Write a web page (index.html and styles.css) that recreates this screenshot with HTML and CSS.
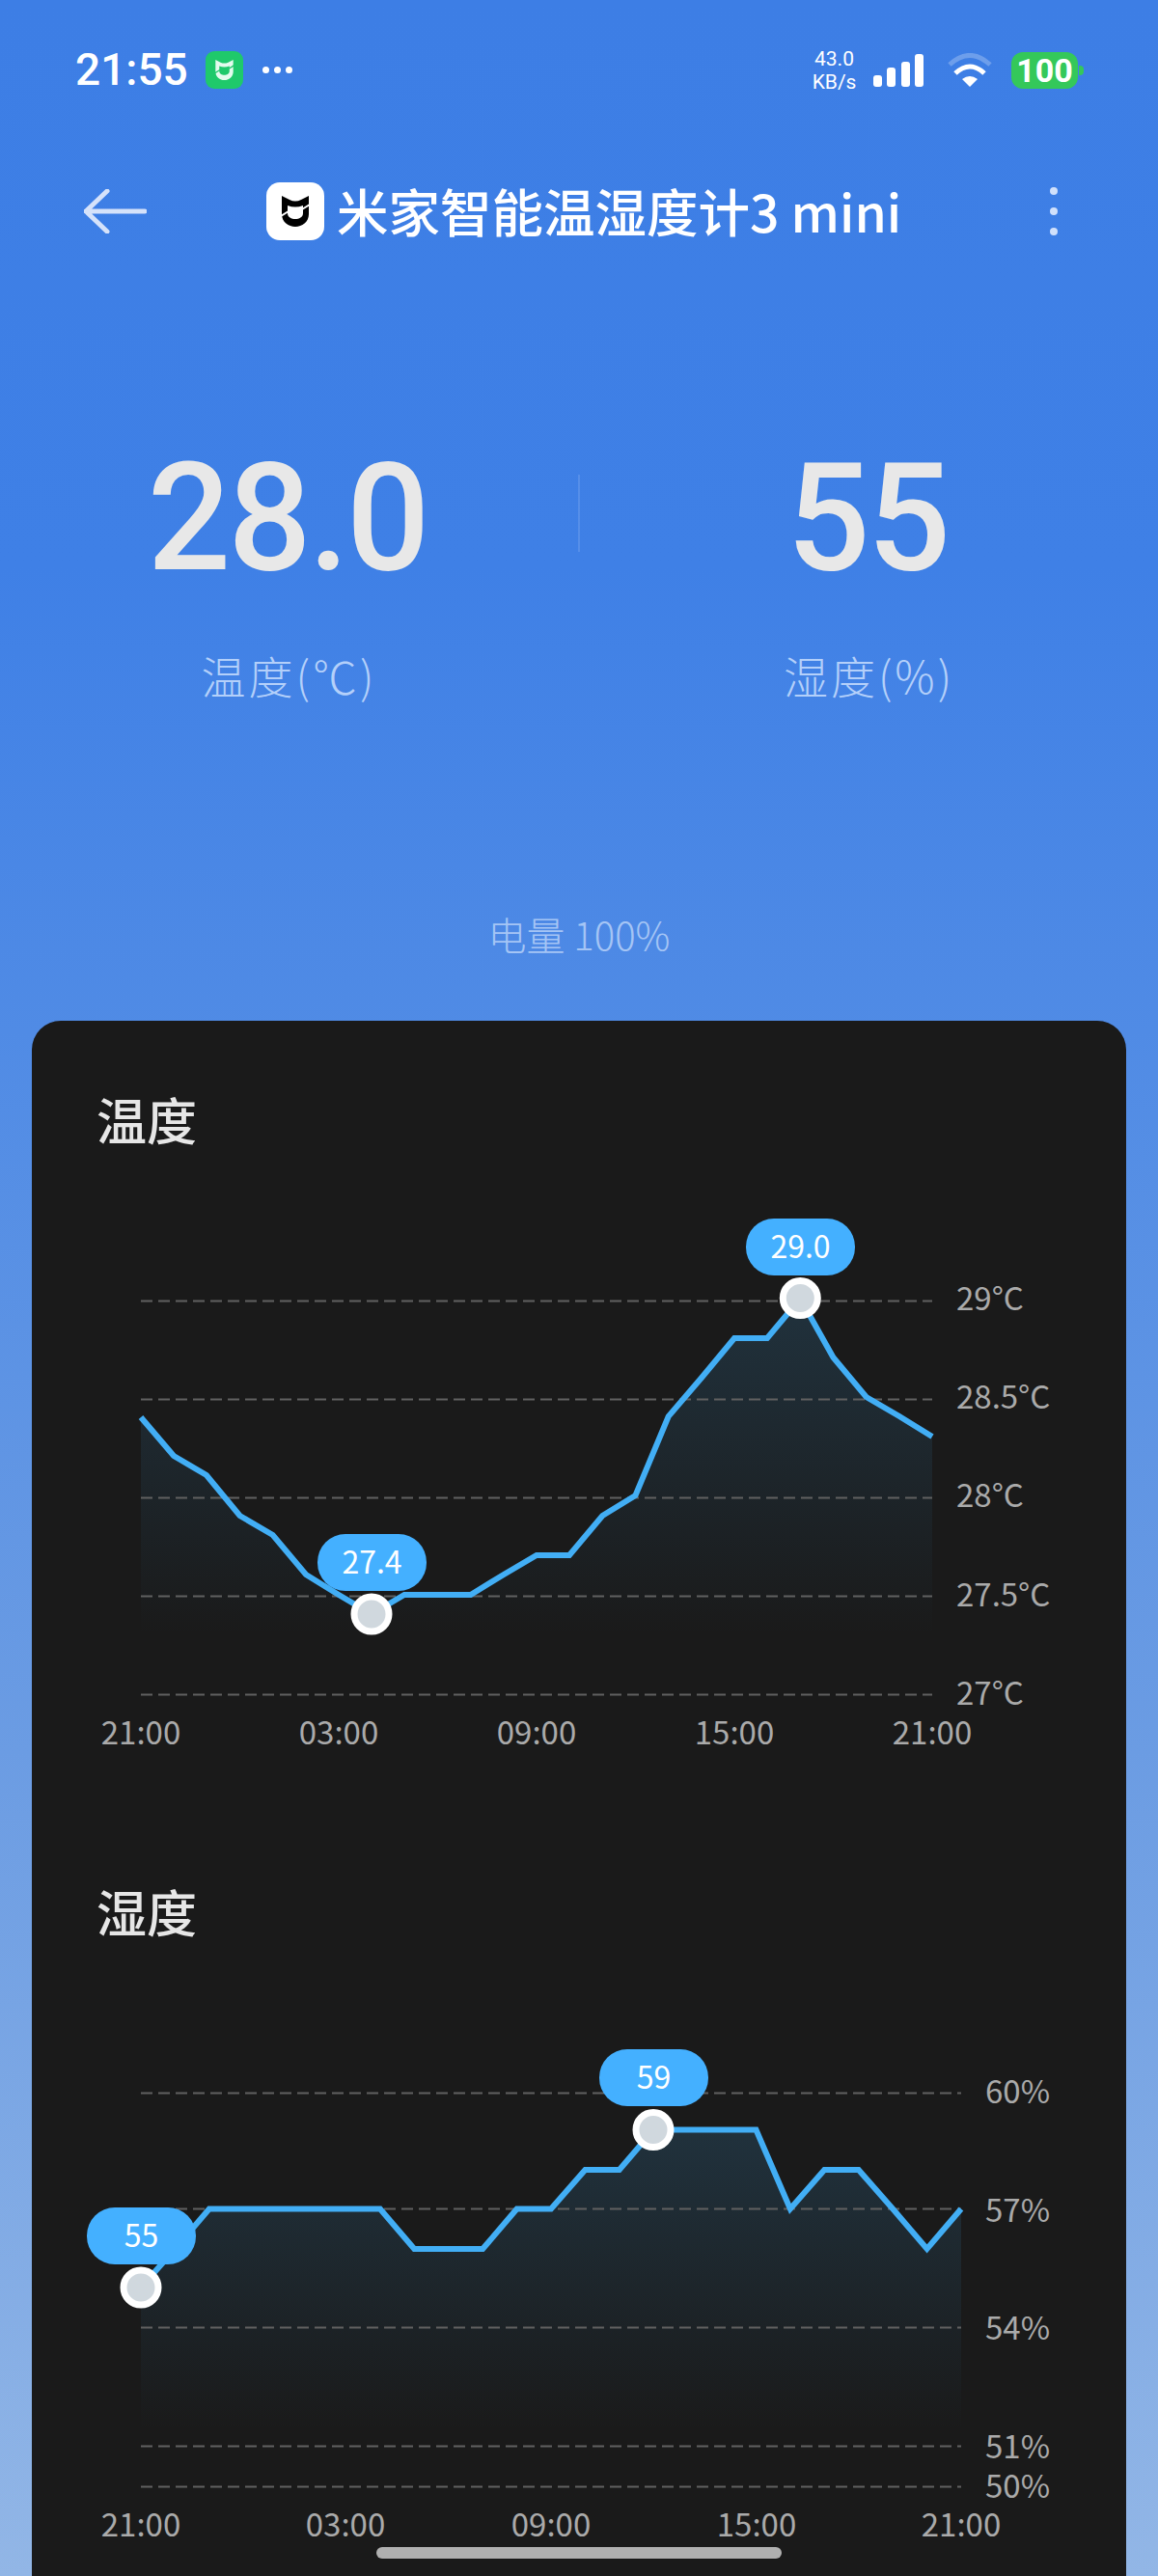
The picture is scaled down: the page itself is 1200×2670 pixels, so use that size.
FILE: index.html
```html
<!DOCTYPE html>
<html lang="zh-CN">
<head>
    <meta charset="UTF-8">
    <meta name="viewport" content="width=device-width, initial-scale=1.0">
    <title>米家智能温湿度计3 mini</title>
    <link rel="stylesheet" href="styles.css">
</head>
<body>
    <svg class="defs" width="0" height="0" aria-hidden="true">
        <defs>
            <symbol id="mi-cat" viewBox="0 0 28 32">
                <path fill-rule="evenodd" fill="currentColor" d="M0 0 L8 4 Q14 7 20 4 L28 0 V19 C28 27 21 32 14 32 C7 32 0 27 0 19 Z M6 10 Q14 13 22 10 V18 C22 22 18 24 14 24 C10 24 6 22 6 18 Z"/>
                <path class="mi-slit" d="M-1 21 L7 16 M29 9 L21 14"/>
            </symbol>
            <linearGradient id="tempFill" gradientUnits="userSpaceOnUse" x1="0" y1="1346" x2="0" y2="1695">
                <stop offset="0" stop-color="#42aef5" stop-opacity="0.16"/>
                <stop offset="1" stop-color="#42aef5" stop-opacity="0"/>
            </linearGradient>
            <linearGradient id="humFill" gradientUnits="userSpaceOnUse" x1="0" y1="2207" x2="0" y2="2520">
                <stop offset="0" stop-color="#42aef5" stop-opacity="0.16"/>
                <stop offset="1" stop-color="#42aef5" stop-opacity="0"/>
            </linearGradient>
        </defs>
    </svg>

    <div class="page">
        <div class="status-bar">
            <span class="clock">21:55</span>
            <span class="app-badge"><svg class="badge-cat"><use href="#mi-cat"/></svg></span>
            <span class="status-dots"><i></i><i></i><i></i></span>
            <div class="status-right">
                <div class="net-speed"><span>43.0</span><span>KB/s</span></div>
                <div class="signal"><i class="s1"></i><i class="s2"></i><i class="s3"></i><i class="s4"></i></div>
                <svg class="wifi" viewBox="981 54 48 36">
                    <path d="M984 66 Q1005 47 1026 66" fill="none" stroke="#fff" stroke-opacity="0.25" stroke-width="5"/>
                    <path d="M990 75 Q1005 61 1020 75" fill="none" stroke="#fff" stroke-width="5"/>
                    <path d="M997 81 Q1005 75 1013 81 L1005 89 Z" fill="#fff"/>
                </svg>
                <div class="battery">100</div>
            </div>
        </div>

        <div class="title-bar">
            <svg class="back" viewBox="0 0 65 46">
                <path d="M24 2 L2 23 L24 44 M2 23 H63" fill="none" stroke="#d5e2fa" stroke-width="5" stroke-linecap="round" stroke-linejoin="round"/>
            </svg>
            <div class="device">
                <span class="device-logo"><svg class="logo-cat"><use href="#mi-cat"/></svg></span>
                <h1>米家智能温湿度计3 mini</h1>
            </div>
            <div class="more"><i></i><i></i><i></i></div>
        </div>

        <div class="readings">
            <div class="reading">
                <div class="value">28.0</div>
                <div class="label">温度(℃)</div>
            </div>
            <div class="divider"></div>
            <div class="reading">
                <div class="value">55</div>
                <div class="label">湿度(%)</div>
            </div>
        </div>

        <div class="battery-level">电量 100%</div>

        <div class="card">
            <h2>温度</h2>
            <svg class="chart chart-temp" viewBox="33 1240 1134 590">
                <polygon fill="url(#tempFill)" points="146,1469 180,1509 214,1529 248.5,1571 282.7,1591 317,1632 351,1653 385,1673 419,1653 453.5,1653 487.7,1653 522,1632 556,1612 590,1612 624.3,1571 658.5,1550 692.7,1468 727,1428 761,1387 795,1387 829.3,1346 863.5,1407 897.7,1448 932,1468 966,1489 966,1695 146,1695"/>
                <g class="grid">
                    <line x1="146" x2="966" y1="1348.5" y2="1348.5"/>
                    <line x1="146" x2="966" y1="1450.5" y2="1450.5"/>
                    <line x1="146" x2="966" y1="1552.5" y2="1552.5"/>
                    <line x1="146" x2="966" y1="1654.5" y2="1654.5"/>
                    <line x1="146" x2="966" y1="1756.5" y2="1756.5"/>
                </g>
                <polyline class="line" points="146,1469 180,1509 214,1529 248.5,1571 282.7,1591 317,1632 351,1653 385,1673 419,1653 453.5,1653 487.7,1653 522,1632 556,1612 590,1612 624.3,1571 658.5,1550 692.7,1468 727,1428 761,1387 795,1387 829.3,1346 863.5,1407 897.7,1448 932,1468 966,1489"/>
                <g class="axis">
                    <text x="991" y="1358">29°C</text>
                    <text x="991" y="1460">28.5°C</text>
                    <text x="991" y="1562">28°C</text>
                    <text x="991" y="1665">27.5°C</text>
                    <text x="991" y="1767">27°C</text>
                </g>
                <g class="axis axis-x">
                    <text x="146" y="1808">21:00</text>
                    <text x="351" y="1808">03:00</text>
                    <text x="556" y="1808">09:00</text>
                    <text x="761" y="1808">15:00</text>
                    <text x="966" y="1808">21:00</text>
                </g>
                <rect class="pill" x="329" y="1590" width="113" height="59" rx="29"/>
                <text class="pill-text" x="385.5" y="1631">27.4</text>
                <circle class="marker" cx="385" cy="1673" r="18"/>
                <rect class="pill" x="773" y="1263" width="113" height="59" rx="29"/>
                <text class="pill-text" x="829.5" y="1304">29.0</text>
                <circle class="marker" cx="829.3" cy="1345.5" r="18"/>
            </svg>

            <h2 class="second">湿度</h2>
            <svg class="chart chart-hum" viewBox="33 2100 1134 540">
                <polygon fill="url(#humFill)" points="146,2371 181.4,2331 216.8,2289.5 393.9,2289.5 429.3,2331 500.2,2331 535.6,2289.5 571,2289.5 606.4,2249 641.8,2249 677.25,2207.5 783.5,2207.5 818.9,2289.5 854.3,2249 889.75,2249 925.2,2289.5 960.6,2331 996,2289.5 996,2520 146,2520"/>
                <g class="grid">
                    <line x1="146" x2="996" y1="2169.5" y2="2169.5"/>
                    <line x1="146" x2="996" y1="2289.5" y2="2289.5"/>
                    <line x1="146" x2="996" y1="2412.5" y2="2412.5"/>
                    <line x1="146" x2="996" y1="2535.5" y2="2535.5"/>
                    <line x1="146" x2="996" y1="2577.5" y2="2577.5"/>
                </g>
                <polyline class="line" points="146,2371 181.4,2331 216.8,2289.5 393.9,2289.5 429.3,2331 500.2,2331 535.6,2289.5 571,2289.5 606.4,2249 641.8,2249 677.25,2207.5 783.5,2207.5 818.9,2289.5 854.3,2249 889.75,2249 925.2,2289.5 960.6,2331 996,2289.5"/>
                <g class="axis">
                    <text x="1021" y="2180">60%</text>
                    <text x="1021" y="2303">57%</text>
                    <text x="1021" y="2425">54%</text>
                    <text x="1021" y="2548">51%</text>
                    <text x="1021" y="2589">50%</text>
                </g>
                <g class="axis axis-x">
                    <text x="146" y="2629">21:00</text>
                    <text x="358" y="2629">03:00</text>
                    <text x="571" y="2629">09:00</text>
                    <text x="784" y="2629">15:00</text>
                    <text x="996" y="2629">21:00</text>
                </g>
                <rect class="pill" x="90" y="2288" width="113" height="59" rx="29"/>
                <text class="pill-text" x="146.5" y="2329">55</text>
                <circle class="marker" cx="146" cy="2371" r="18"/>
                <rect class="pill" x="621" y="2124" width="113" height="59" rx="29"/>
                <text class="pill-text" x="677.5" y="2165">59</text>
                <circle class="marker" cx="677" cy="2207.5" r="18"/>
            </svg>
        </div>

        <div class="home-bar"></div>
    </div>
</body>
</html>
```

FILE: styles.css
```css
body {
    margin: 0;
    font-family: "Noto Sans CJK SC", "Noto Sans", sans-serif;
}
h1, h2 {
    margin: 0;
    font-weight: 500;
}
.defs {
    position: absolute;
}
.mi-slit {
    fill: none;
    stroke: var(--slit);
    stroke-width: 2;
}
.page {
    position: relative;
    display: flex;
    flex-direction: column;
    width: 1200px;
    height: 2670px;
    overflow: hidden;
    background: linear-gradient(#3d7ee5 0, #3f80e6 22%, #508be5 40%, #6b9ce3 68%, #92b6e6 100%);
}

/* status bar */
.status-bar {
    display: flex;
    align-items: center;
    height: 39px;
    margin-top: 53px;
    padding: 0 77px 0 78px;
    color: #fff;
}
.clock {
    width: 135px;
    font-family: Roboto, sans-serif;
    font-size: 46px;
    font-weight: 500;
    line-height: 39px;
}
.app-badge {
    display: flex;
    align-items: center;
    justify-content: center;
    width: 39px;
    height: 39px;
    border-radius: 9px;
    background: #1fc96b;
}
.badge-cat {
    width: 19px;
    height: 21px;
    color: #e4fbee;
    --slit: #1fc96b;
}
.status-dots {
    display: flex;
    gap: 5px;
    margin-left: 20px;
}
.status-dots i {
    width: 7px;
    height: 7px;
    border-radius: 50%;
    background: #fff;
}
.status-right {
    display: flex;
    align-items: center;
    margin-left: auto;
}
.net-speed {
    display: flex;
    flex-direction: column;
    align-items: center;
    width: 44px;
    font-family: Roboto, sans-serif;
    font-size: 21px;
    line-height: 24px;
}
.signal {
    display: flex;
    align-items: flex-end;
    gap: 5.5px;
    height: 34px;
    margin-left: 18px;
}
.signal i {
    width: 9px;
    border-radius: 3px;
    background: #fff;
}
.signal .s1 { height: 12px; }
.signal .s2 { height: 20px; }
.signal .s3 { height: 26px; }
.signal .s4 { height: 34px; }
.wifi {
    width: 48px;
    height: 36px;
    margin-left: 24px;
}
.battery {
    position: relative;
    width: 69px;
    height: 38px;
    margin: 0 6px 0 19px;
    border-radius: 12px;
    background: #34c85a;
    font-family: Roboto, sans-serif;
    font-size: 34px;
    font-weight: 700;
    line-height: 38px;
    text-align: center;
}
.battery::after {
    content: "";
    position: absolute;
    top: 14px;
    right: -6px;
    width: 5px;
    height: 10px;
    border-radius: 0 4px 4px 0;
    background: #34c85a;
}

/* title bar */
.title-bar {
    display: flex;
    align-items: center;
    height: 60px;
    margin-top: 97px;
    padding: 0 104px 0 87px;
}
.back {
    width: 65px;
    height: 46px;
}
.device {
    display: flex;
    align-items: center;
    margin-left: 124px;
}
.device-logo {
    display: flex;
    align-items: center;
    justify-content: center;
    width: 60px;
    height: 60px;
    border-radius: 14px;
    background: #fff;
}
.logo-cat {
    width: 28px;
    height: 32px;
    color: #000;
    --slit: #fff;
}
.device h1 {
    margin: -3px 0 0 13px;
    color: #fff;
    font-size: 53.5px;
    font-weight: 500;
    line-height: 60px;
    white-space: nowrap;
}
.more {
    display: flex;
    flex-direction: column;
    gap: 13px;
    margin-left: auto;
}
.more i {
    width: 8px;
    height: 8px;
    border-radius: 50%;
    background: #d0e0fb;
}

/* big readings */
.readings {
    display: flex;
    margin-top: 228px;
}
.reading {
    display: flex;
    flex-direction: column;
    align-items: center;
    flex: 1;
}
.value {
    margin-right: 3px;
    color: #e8e8e8;
    font-family: Roboto, sans-serif;
    font-size: 156px;
    font-weight: 500;
    line-height: 120px;
    letter-spacing: -3px;
    transform: scaleX(0.975);
}
.label {
    margin-top: 72px;
    color: #b4d0fa;
    font-size: 46px;
    font-weight: 300;
    line-height: 60px;
    letter-spacing: 3px;
}
.divider {
    width: 2px;
    height: 80px;
    margin-top: 15px;
    background: rgba(255, 255, 255, 0.12);
}
.battery-level {
    margin-top: 214px;
    color: #a5c5f5;
    font-size: 40px;
    font-weight: 300;
    line-height: 50px;
    text-align: center;
}

/* charts card */
.card {
    flex: 1;
    margin: 65px 33px 0;
    padding-top: 72px;
    border-radius: 30px 30px 0 0;
    background: #1a1a1a;
}
.card h2 {
    margin-left: 67px;
    color: #e6e6e6;
    font-size: 52px;
    line-height: 60px;
}
.card h2.second {
    margin-top: 121px;
}
.chart {
    display: block;
    width: 1134px;
}
.chart-temp {
    height: 590px;
    margin-top: 50px;
}
.chart-hum {
    height: 540px;
    margin-top: 89px;
}
.grid line {
    stroke: #606060;
    stroke-width: 2;
    stroke-dasharray: 12 6;
}
.line {
    fill: none;
    stroke: #42aef5;
    stroke-width: 6;
}
.axis text {
    fill: #aaa;
    font-size: 33px;
    font-weight: 400;
}
.axis-x text {
    text-anchor: middle;
}
.pill {
    fill: #44b0ff;
}
.pill-text {
    fill: #fff;
    font-size: 32px;
    font-weight: 400;
    text-anchor: middle;
}
.marker {
    fill: #d0d8de;
    stroke: #fff;
    stroke-width: 7;
}
.home-bar {
    position: absolute;
    left: 390px;
    bottom: 18px;
    width: 420px;
    height: 12px;
    border-radius: 6px;
    background: #b0b0b0;
}
```
